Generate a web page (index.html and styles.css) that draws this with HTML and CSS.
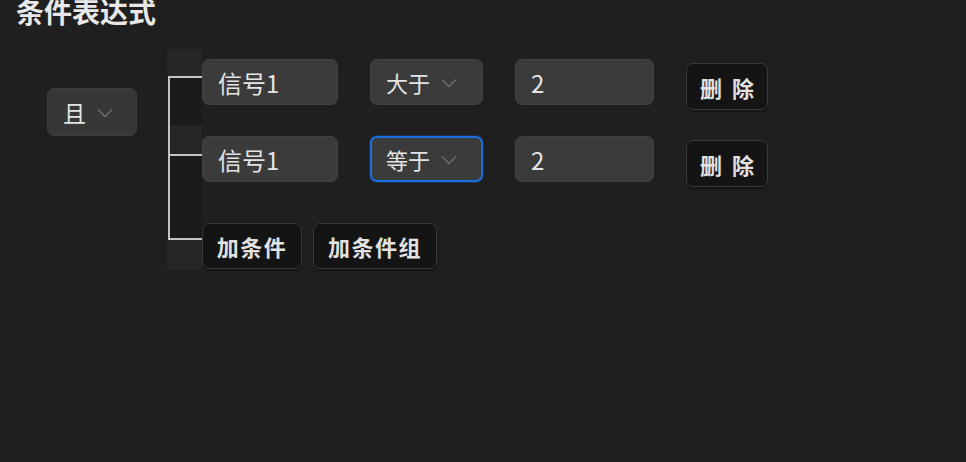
FILE: index.html
```html
<!DOCTYPE html>
<html lang="zh">
<head>
<meta charset="utf-8">
<link rel="stylesheet" href="styles.css">
</head>
<body>
<h1 class="title">条件表达式</h1>
<div class="main">
  <div class="select logic">
    <span class="sel-text">且</span>
    <svg class="chev" width="16" height="10" viewBox="0 0 16 10"><path d="M1 1.5 L8 8.5 L15 1.5" fill="none" stroke="#6f6f6f" stroke-width="1.4"/></svg>
  </div>
  <div class="tree">
    <div class="conn">
      <div class="seg light s1"></div>
      <div class="seg dark s2"></div>
      <div class="seg light s3"></div>
      <div class="seg dark s4"></div>
      <div class="seg light s5"></div>
    </div>
    <div class="rows">
      <div class="row r1">
        <div class="input sig">信号1</div>
        <div class="select op">
          <span class="sel-text">大于</span>
          <svg class="chev" width="16" height="10" viewBox="0 0 16 10"><path d="M1 1.5 L8 8.5 L15 1.5" fill="none" stroke="#6f6f6f" stroke-width="1.4"/></svg>
        </div>
        <div class="input val">2</div>
        <button class="btn del">删 除</button>
      </div>
      <div class="row r2">
        <div class="input sig">信号1</div>
        <div class="select op focus">
          <span class="sel-text">等于</span>
          <svg class="chev" width="16" height="10" viewBox="0 0 16 10"><path d="M1 1.5 L8 8.5 L15 1.5" fill="none" stroke="#6f6f6f" stroke-width="1.4"/></svg>
        </div>
        <div class="input val">2</div>
        <button class="btn del">删 除</button>
      </div>
      <div class="row r3">
        <button class="btn add">加条件</button>
        <button class="btn addg">加条件组</button>
      </div>
    </div>
  </div>
</div>
</body>
</html>
```
FILE: styles.css
```css
html, body {
  margin: 0;
  padding: 0;
  background: #1f1f1f;
  height: 100%;
  overflow: hidden;
}
body {
  font-family: "Noto Sans CJK SC", "Noto Sans", sans-serif;
  color: #e6e6e6;
}
.title {
  margin: -4px 0 0 16px;
  font-size: 28px;
  font-weight: 700;
  line-height: 30px;
  color: #e8e8e8;
  height: 26px;
}
.main {
  display: flex;
  align-items: flex-start;
  padding-left: 47px;
  margin-top: 27px;
}
.select {
  box-sizing: border-box;
  display: flex;
  align-items: center;
  background: #373737;
  border: 1px solid #3e3e3e;
  border-radius: 7px;
  color: #e4e4e4;
}
.logic {
  width: 90px;
  height: 48px;
  margin-top: 39px;
  margin-right: 30px;
  padding-left: 15px;
  font-size: 23px;
}
.logic .chev {
  margin-left: 11px;
  margin-top: 2px;
}
.sel-text {
  line-height: 1;
}
.tree {
  display: flex;
}
.conn {
  width: 35px;
  display: flex;
  flex-direction: column;
}
.seg.light { background: #262626; }
.seg.dark { background: #1b1b1b; }
.s1 { height: 27px; }
.s2 { height: 49px; border-top: 2px solid #c4c4c4; box-sizing: border-box; }
.s3 { height: 29px; }
.s4 { height: 86px; border-top: 2px solid #c4c4c4; border-bottom: 2px solid #c4c4c4; box-sizing: border-box; }
.s5 { height: 30px; }
.s2, .s3, .s4 {
  margin-left: 1px;
  border-left: 2px solid #c4c4c4;
}
.rows {
  padding-top: 10px;
  padding-bottom: 1px;
  display: flex;
  flex-direction: column;
}
.row {
  display: flex;
  align-items: flex-start;
}
.r2 { margin-top: 26px; }
.r3 { margin-top: 36px; }
.input {
  box-sizing: border-box;
  height: 46px;
  background: #3b3b3b;
  border: 1px solid #424242;
  border-radius: 7px;
  display: flex;
  align-items: center;
  padding-left: 15px;
  font-size: 24px;
  color: #e4e4e4;
}
.sig { width: 136px; margin-right: 32px; }
.val { width: 139px; margin-right: 32px; }
.op {
  width: 113px;
  height: 46px;
  margin-right: 32px;
  padding-left: 15px;
  font-size: 22px;
  background: #3b3b3b;
  border-color: #424242;
}
.op .chev { margin-left: 11px; margin-top: 2px; }
.op.focus {
  border: 2px solid #1a6ee0;
  padding-left: 14px;
  box-shadow: 0 0 0 1px rgba(26, 110, 224, 0.25);
}
.btn {
  box-sizing: border-box;
  height: 47px;
  background: #141414;
  border: 1px solid #3a3a3a;
  border-radius: 7px;
  color: #e2e2e2;
  font-family: "Noto Sans CJK SC", "Noto Sans", sans-serif;
  font-weight: 700;
  font-size: 22px;
  padding: 0;
  box-shadow: 0 2px 2px rgba(0, 0, 0, 0.35);
}
.del {
  width: 82px;
  margin-top: 4px;
  word-spacing: 5px;
}
.add {
  width: 100px;
  height: 46px;
  margin-right: 11px;
  letter-spacing: 1.5px;
}
.addg {
  width: 124px;
  height: 46px;
  letter-spacing: 1.5px;
}
```
